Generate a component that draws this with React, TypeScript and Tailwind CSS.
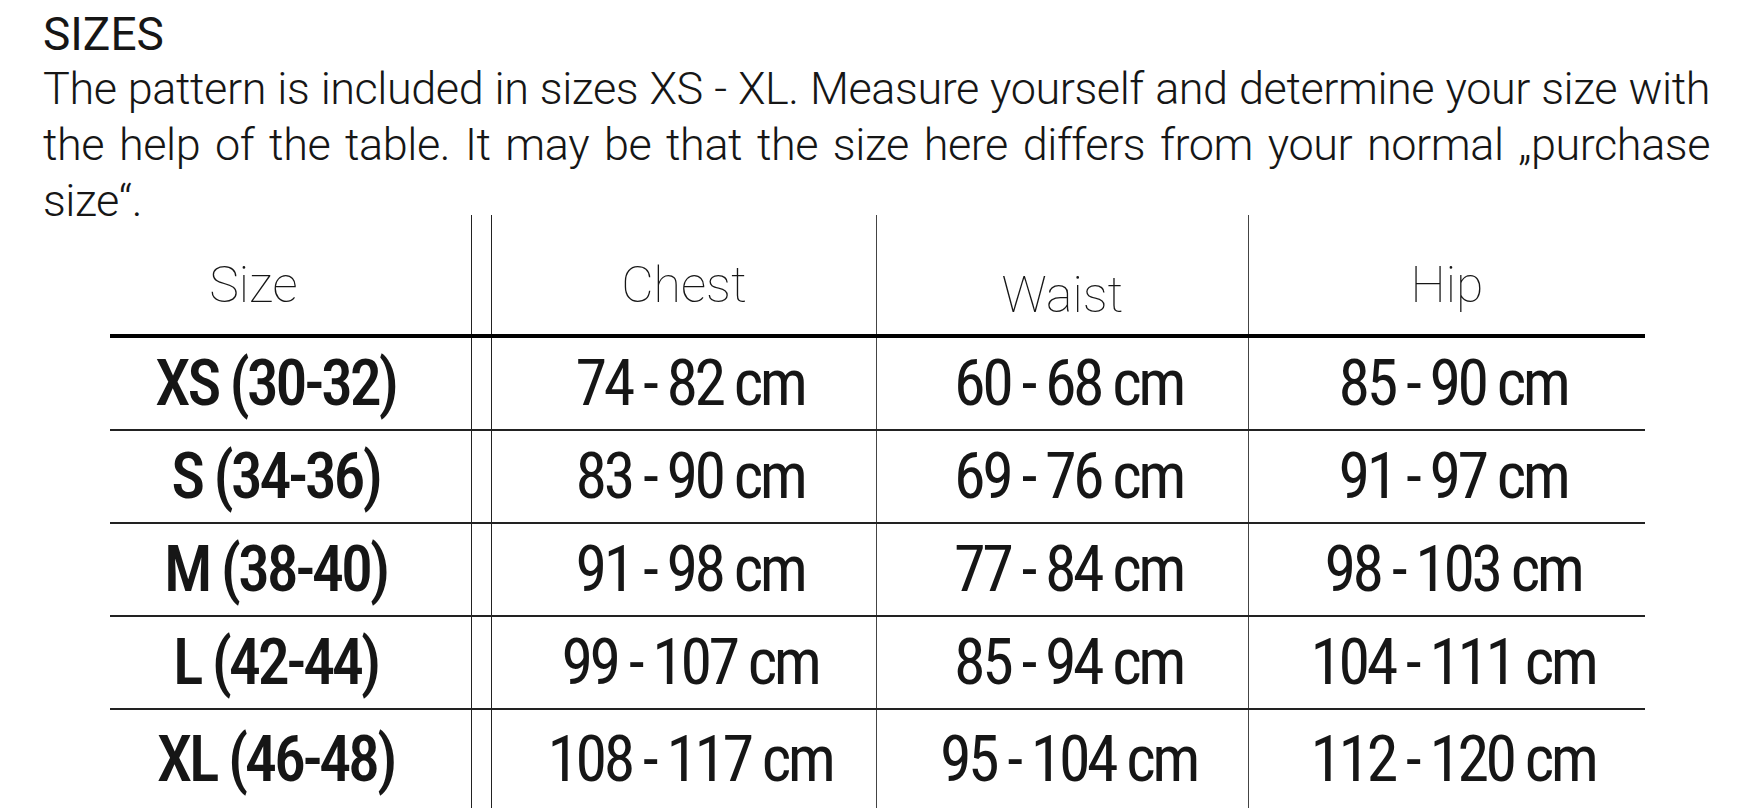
const rows = [
  ['XS (30-32)', '74 - 82 cm', '60 - 68 cm', '85 - 90 cm'],
  ['S (34-36)', '83 - 90 cm', '69 - 76 cm', '91 - 97 cm'],
  ['M (38-40)', '91 - 98 cm', '77 - 84 cm', '98 - 103 cm'],
  ['L (42-44)', '99 - 107 cm', '85 - 94 cm', '104 - 111 cm'],
  ['XL (46-48)', '108 - 117 cm', '95 - 104 cm', '112 - 120 cm'],
];

const cols = 'grid grid-cols-[362px_20px_385px_372px_396px]';

export default function App() {
  return (
    <div className="h-screen overflow-hidden bg-white pl-[43px] pt-[11px] text-[#161616] [font-family:Roboto,sans-serif]">
      <h2 className="text-[46px] font-normal leading-none">SIZES</h2>
      <p className="mt-[4px] text-[45px] leading-[56px] tracking-[-0.01em] [font-stretch:89%] [font-weight:300]">
        <span className="block w-[1667px] whitespace-nowrap [text-align-last:justify]">
          The pattern is included in sizes XS - XL. Measure yourself and determine your size with
        </span>
        <span className="block w-[1667px] whitespace-nowrap [text-align-last:justify]">
          the help of the table. It may be that the size here differs from your normal „purchase
        </span>
        <span className="block whitespace-nowrap">size“.</span>
      </p>

      <div className="-mt-[14px] ml-[67px] w-[1535px]">
        {/* header */}
        <div className={`${cols} h-[123px] border-b-4 border-black text-[50px] leading-none [font-stretch:87%] [font-weight:250]`}>
          <div className="flex items-end justify-center border-r border-[#222] pb-[24px] pr-[74px]">Size</div>
          <div className="border-r border-[#222]" />
          <div className="flex items-end justify-center border-r border-[#444] pb-[24px]">Chest</div>
          <div className="flex items-end justify-center border-r border-[#444] pb-[14px]">Waist</div>
          <div className="flex items-end justify-center pb-[24px]">Hip</div>
        </div>

        {rows.map((r, i) => (
          <div
            key={r[0]}
            className={`${cols} text-[64px] leading-none tracking-[-0.055em] [font-stretch:75%] ${
              i < rows.length - 1 ? 'h-[93px] border-b-2 border-[#222]' : 'h-[100px]'
            }`}
          >
            <div className="flex items-center justify-center border-r border-[#222] pr-[30px] font-medium tracking-[-0.05em]">
              {r[0]}
            </div>
            <div className="border-r border-[#222]" />
            <div className="flex items-center justify-center border-r border-[#444] pl-3">{r[1]}</div>
            <div className="flex items-center justify-center border-r border-[#444] pl-3">{r[2]}</div>
            <div className="flex items-center justify-center pl-3">{r[3]}</div>
          </div>
        ))}
      </div>
    </div>
  );
}
